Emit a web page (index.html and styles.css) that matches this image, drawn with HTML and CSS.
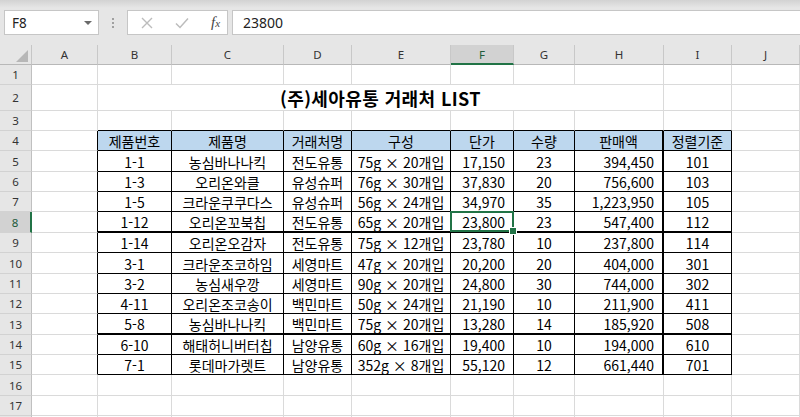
FILE: index.html
```html
<!DOCTYPE html>
<html lang="ko">
<head>
<meta charset="utf-8">
<title>거래처 LIST</title>
<link rel="stylesheet" href="styles.css">
</head>
<body>
<div class="fbar">
  <div class="namebox"><span>F8</span><span class="dd"></span></div>
  <div class="dots"><i></i><i></i><i></i></div>
  <div class="fxbox">
    <svg class="ic" width="12" height="12" viewBox="0 0 12 12"><path d="M1 1L11 11M11 1L1 11" stroke="#bcbcbc" stroke-width="1.4" fill="none"/></svg>
    <svg class="ic" width="14" height="12" viewBox="0 0 14 12"><path d="M1 6.5L5 10.5L13 1.5" stroke="#bcbcbc" stroke-width="1.5" fill="none"/></svg>
    <span class="fx">f<small>x</small></span>
  </div>
  <div class="finput">23800</div>
</div>
<div class="sheet">
  <div class="corner"><svg width="14" height="14" viewBox="0 0 14 14"><polygon points="13,1 13,13 1,13" fill="#b7b7b7"/></svg></div>
  <div class="ch">A</div><div class="ch">B</div><div class="ch">C</div><div class="ch">D</div><div class="ch">E</div><div class="ch sel">F</div><div class="ch">G</div><div class="ch">H</div><div class="ch">I</div><div class="ch">J</div>

  <div class="rh">1</div><div class="c"></div><div class="c"></div><div class="c"></div><div class="c"></div><div class="c"></div><div class="c"></div><div class="c"></div><div class="c"></div><div class="c"></div><div class="c"></div>

  <div class="rh">2</div><div class="c"></div><div class="c title">(주)세아유통 거래처 LIST</div><div class="c"></div><div class="c"></div>

  <div class="rh">3</div><div class="c"></div><div class="c tt"></div><div class="c tt"></div><div class="c tt"></div><div class="c tt"></div><div class="c tt"></div><div class="c tt"></div><div class="c tt"></div><div class="c tt"></div><div class="c"></div>

  <div class="rh">4</div><div class="c tl"></div><div class="t th">제품번호</div><div class="t th">제품명</div><div class="t th">거래처명</div><div class="t th">구성</div><div class="t th">단가</div><div class="t th">수량</div><div class="t th hr">판매액</div><div class="t th">정렬기준</div><div class="c"></div>

  <div class="rh">5</div><div class="c tl"></div><div class="t">1-1</div><div class="t">농심바나나킥</div><div class="t">전도유통</div><div class="t">75g × 20개입</div><div class="t r">17,150</div><div class="t">23</div><div class="t r hr">394,450</div><div class="t">101</div><div class="c"></div>

  <div class="rh">6</div><div class="c tl"></div><div class="t">1-3</div><div class="t">오리온와클</div><div class="t">유성슈퍼</div><div class="t">76g × 30개입</div><div class="t r">37,830</div><div class="t">20</div><div class="t r hr">756,600</div><div class="t">103</div><div class="c"></div>

  <div class="rh">7</div><div class="c tl"></div><div class="t">1-5</div><div class="t">크라운쿠쿠다스</div><div class="t">유성슈퍼</div><div class="t">56g × 24개입</div><div class="t r">34,970</div><div class="t">35</div><div class="t r hr">1,223,950</div><div class="t">105</div><div class="c"></div>

  <div class="rh rsel">8</div><div class="c tl"></div><div class="t hb">1-12</div><div class="t hb">오리온꼬북칩</div><div class="t hb">전도유통</div><div class="t hb">65g × 20개입</div><div class="t r hb cur">23,800</div><div class="t hb">23</div><div class="t r hb hr">547,400</div><div class="t hb">112</div><div class="c"></div>

  <div class="rh">9</div><div class="c tl"></div><div class="t">1-14</div><div class="t">오리온오감자</div><div class="t">전도유통</div><div class="t">75g × 12개입</div><div class="t r">23,780</div><div class="t">10</div><div class="t r hr">237,800</div><div class="t">114</div><div class="c"></div>

  <div class="rh">10</div><div class="c tl"></div><div class="t">3-1</div><div class="t">크라운조코하임</div><div class="t">세영마트</div><div class="t">47g × 20개입</div><div class="t r">20,200</div><div class="t">20</div><div class="t r hr">404,000</div><div class="t">301</div><div class="c"></div>

  <div class="rh">11</div><div class="c tl"></div><div class="t">3-2</div><div class="t">농심새우깡</div><div class="t">세영마트</div><div class="t">90g × 20개입</div><div class="t r">24,800</div><div class="t">30</div><div class="t r hr">744,000</div><div class="t">302</div><div class="c"></div>

  <div class="rh">12</div><div class="c tl"></div><div class="t">4-11</div><div class="t">오리온조코송이</div><div class="t">백민마트</div><div class="t">50g × 24개입</div><div class="t r">21,190</div><div class="t">10</div><div class="t r hr">211,900</div><div class="t">411</div><div class="c"></div>

  <div class="rh">13</div><div class="c tl"></div><div class="t hb">5-8</div><div class="t hb">농심바나나킥</div><div class="t hb">백민마트</div><div class="t hb">75g × 20개입</div><div class="t r hb">13,280</div><div class="t hb">14</div><div class="t r hb hr">185,920</div><div class="t hb">508</div><div class="c"></div>

  <div class="rh">14</div><div class="c tl"></div><div class="t">6-10</div><div class="t">해태허니버터칩</div><div class="t">남양유통</div><div class="t">60g × 16개입</div><div class="t r">19,400</div><div class="t">10</div><div class="t r hr">194,000</div><div class="t">610</div><div class="c"></div>

  <div class="rh">15</div><div class="c tl"></div><div class="t">7-1</div><div class="t">롯데마가렛트</div><div class="t">남양유통</div><div class="t">352g × 8개입</div><div class="t r">55,120</div><div class="t">12</div><div class="t r hr">661,440</div><div class="t">701</div><div class="c"></div>

  <div class="rh">16</div><div class="c"></div><div class="c"></div><div class="c"></div><div class="c"></div><div class="c"></div><div class="c"></div><div class="c"></div><div class="c"></div><div class="c"></div><div class="c"></div>

  <div class="rh">17</div><div class="c"></div><div class="c"></div><div class="c"></div><div class="c"></div><div class="c"></div><div class="c"></div><div class="c"></div><div class="c"></div><div class="c"></div><div class="c"></div>

  <div class="rh"></div><div class="c"></div><div class="c"></div><div class="c"></div><div class="c"></div><div class="c"></div><div class="c"></div><div class="c"></div><div class="c"></div><div class="c"></div><div class="c"></div>
</div>
</body>
</html>
```
FILE: styles.css
```css
* { box-sizing: border-box; margin: 0; padding: 0; }
html, body { width: 800px; height: 417px; overflow: hidden; background: #fff; }
body { font-family: "Noto Sans CJK KR", "Noto Sans", sans-serif; color: #000; }

.fbar {
  height: 45px;
  background: linear-gradient(#d2d2d2, #e6e6e6 8px, #e6e6e6);
  display: flex;
  align-items: flex-start;
  padding: 10px 0 0 4px;
}
.namebox {
  width: 95px; height: 25px;
  background: #fff; border: 1px solid #c6c6c6;
  display: flex; align-items: center; justify-content: space-between;
  padding: 0 6px 0 7px;
  font-family: "Noto Sans", sans-serif; font-size: 13.5px; color: #222;
}
.dd { width: 0; height: 0; border-left: 4px solid transparent; border-right: 4px solid transparent; border-top: 4px solid #6a6a6a; }
.dots { width: 28px; height: 25px; display: flex; flex-direction: column; align-items: center; justify-content: center; gap: 2px; }
.dots i { display: block; width: 2px; height: 2px; background: #a0a0a0; }
.fxbox {
  width: 101px; height: 25px; background: #fff; border: 1px solid #c6c6c6;
  display: flex; align-items: center; padding-left: 13px;
}
.fxbox .ic { margin-right: 22px; }
.fx { font-family: "Liberation Serif", serif; font-style: italic; font-size: 15px; color: #444; }
.fx small { font-size: 11px; }
.finput {
  flex: 1; height: 25px; margin-left: 4px; background: #fff;
  border: 1px solid #c6c6c6; border-right: none;
  display: flex; align-items: center; padding-left: 10px;
  font-family: "Noto Sans", sans-serif; font-size: 14px; color: #222;
}

.sheet {
  display: grid;
  grid-template-columns: 32px 66px 74px 112px 68px 99px 63px 61px 89px 68px 1fr;
  grid-template-rows: 20px 20px 26px 20px 20px 21px 20px 20px 21px 20px 21px 20px 20px 21px 20px 20px 21px 20px 20px;
  height: 372px;
  overflow: hidden;
}
.corner {
  background: #e6e6e6; border-right: 1px solid #c6c6c6; border-bottom: 1px solid #b8b8b8;
  display: flex; align-items: flex-start; justify-content: flex-start; padding: 4px 0 0 15px;
}
.ch {
  background: #e6e6e6; border-right: 1px solid #c8c8c8; border-bottom: 1px solid #b8b8b8;
  display: flex; align-items: center; justify-content: center;
  font-family: "Noto Sans", sans-serif; font-size: 11.5px; color: #333;
}
.ch.sel { background: #d2d2d2; border-bottom: 2px solid #217346; color: #215b3a; }
.rh {
  background: #e6e6e6; border-right: 1px solid #c0c0c0; border-bottom: 1px solid #d2d2d2;
  display: flex; align-items: center; justify-content: center;
  font-family: "Noto Sans", sans-serif; font-size: 11.5px; color: #333;
}
.rh.rsel { background: #d2d2d2; border-right: 2px solid #217346; color: #215b3a; }

.c { border-right: 1px solid #dadada; border-bottom: 1px solid #dadada; }
.c.tl { border-right-color: #000; }
.c.tt { border-bottom-color: #000; }
.title {
  grid-column: span 7;
  display: flex; align-items: center; justify-content: center;
  font-size: 18px; font-weight: 700; letter-spacing: 0.4px;
}

.t {
  border-right: 1px solid #000; border-bottom: 1px solid #000;
  display: flex; align-items: center; justify-content: center;
  font-size: 14px; line-height: 1; white-space: nowrap; overflow: hidden;
  padding-top: 1px;
}
.t.r { justify-content: flex-end; padding-right: 8px; }
.t.th { background: #bdd7ee; }
.t.hb { border-bottom-width: 2px; }
.t.hr { border-right-width: 2px; }
.t.cur { position: relative; overflow: visible; }
.t.cur::after {
  content: ""; position: absolute; top: -1px; left: -1px; right: -1px; bottom: -1px;
  border: 2px solid #217346;
}
.t.cur::before {
  content: ""; position: absolute; right: -4px; bottom: -4px; width: 6px; height: 6px;
  background: #217346; border: 1px solid #fff; z-index: 2;
}
```
